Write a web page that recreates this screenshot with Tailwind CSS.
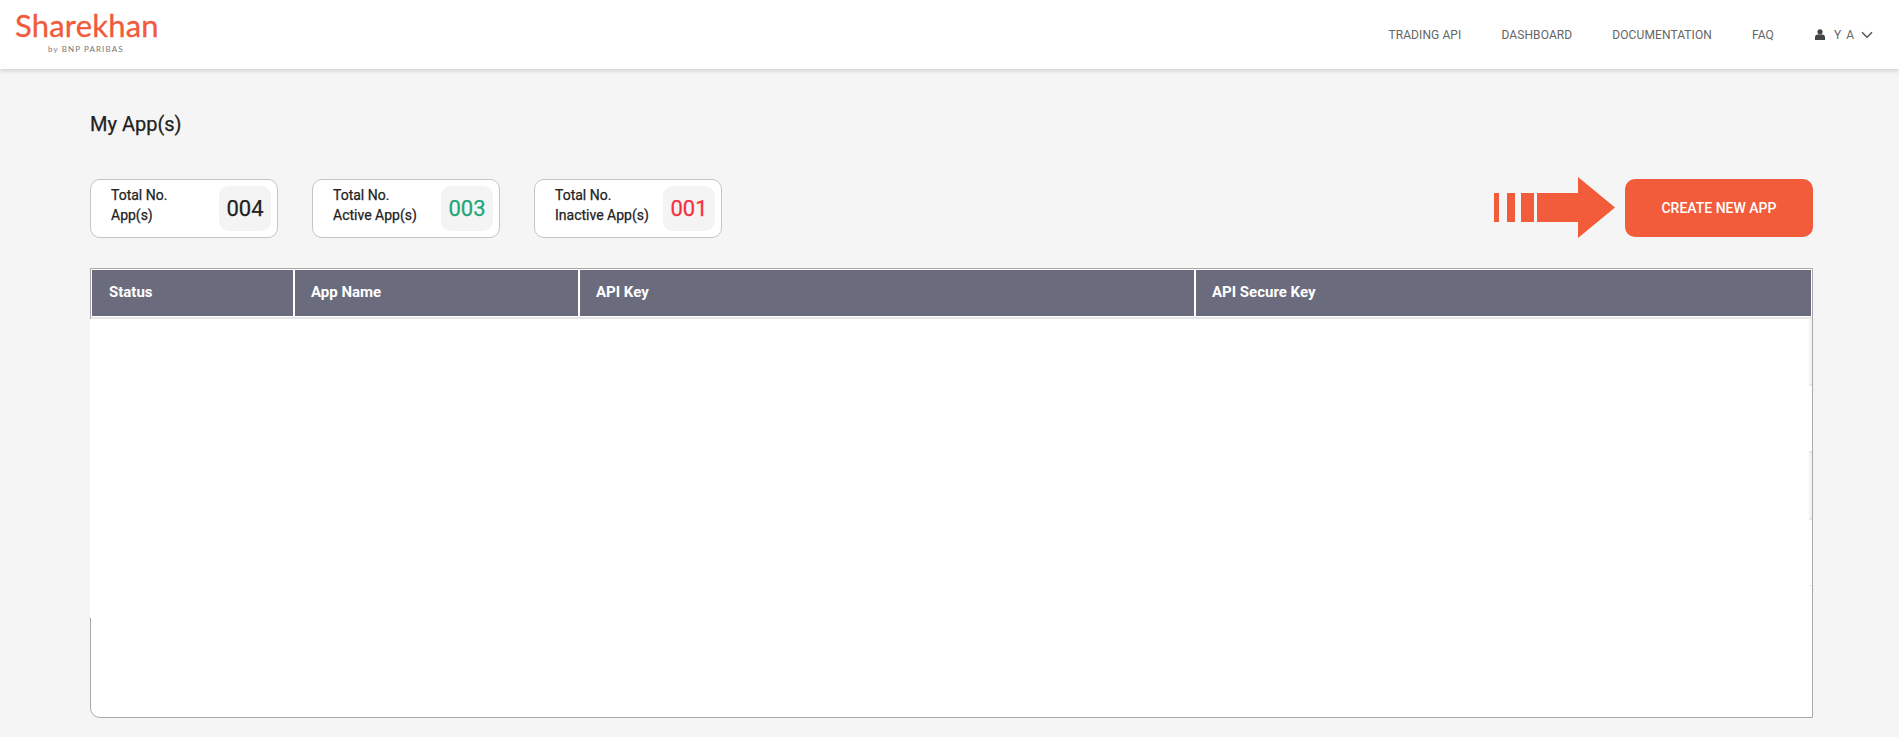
<!DOCTYPE html>
<html lang="en">
<head>
    <meta charset="UTF-8">
    <meta name="viewport" content="width=device-width, initial-scale=1.0">
    <script src="https://cdn.jsdelivr.net/npm/@tailwindcss/browser@4"></script>
    <title>My App(s)</title>
</head>
<body class="h-[737px] overflow-hidden bg-[#f5f5f5] font-['Roboto',sans-serif]">
    <!-- header -->
    <header class="flex h-[69px] items-center justify-between bg-white pl-[15px] pr-[26px] shadow-[0_1px_5px_rgba(0,0,0,0.2)]">
        <div class="mb-[5px] flex w-[143px] flex-col">
            <span class="font-['Lato',sans-serif] text-[31px] leading-[30px] tracking-[0.2px] text-[#f15a3a] [-webkit-text-stroke:0.3px]">Sharekhan</span>
            <span class="mt-[4px] pl-[33px] font-['Lato',sans-serif] text-[8px] leading-[10px] tracking-[1.1px] text-[#777]">by BNP PARIBAS</span>
        </div>
        <nav class="flex items-center text-[12px] tracking-[0.1px] text-[#666]">
            <a class="mr-10">TRADING API</a>
            <a class="mr-10">DASHBOARD</a>
            <a class="mr-10">DOCUMENTATION</a>
            <a class="mr-[41px]">FAQ</a>
            <svg class="mr-[9px] h-[11px] w-[10px]" viewBox="0 0 10 11" fill="#444"><circle cx="5" cy="2.8" r="2.6"/><path d="M0 11V8.2C0 6.6 1.3 5.6 2.6 5.6h4.800C8.700 5.6 10 6.6 10 8.2V11z"/></svg>
            <span class="mr-[6px] tracking-[1px]">Y A</span>
            <svg class="h-[8px] w-[12px]" viewBox="0 0 12 8" fill="none" stroke="#555" stroke-width="1.5"><path d="M1 1.2l5 5 5-5"/></svg>
        </nav>
    </header>

    <main class="pl-[90px] pr-[86px]">
        <h1 class="mt-[45px] text-[20px] leading-[20px] text-[#222] [-webkit-text-stroke:0.25px]">My App(s)</h1>

        <div class="mt-[45px] flex h-[59px] items-center justify-between">
            <div class="flex gap-[34px]">
                <div class="flex h-[59px] w-[188px] items-center justify-between rounded-[10px] border border-[#c4c4c4] bg-white pl-[20px] pr-[6px]">
                    <p class="mb-[8px] text-[14px] leading-[20px] text-[#222] [-webkit-text-stroke:0.25px]">Total No.<br>App(s)</p>
                    <span class="flex h-[45px] w-[52px] items-center justify-center rounded-[10px] bg-[#f4f4f4] text-[22px] text-[#222] [-webkit-text-stroke:0.25px]">004</span>
                </div>
                <div class="flex h-[59px] w-[188px] items-center justify-between rounded-[10px] border border-[#c4c4c4] bg-white pl-[20px] pr-[6px]">
                    <p class="mb-[8px] text-[14px] leading-[20px] text-[#222] [-webkit-text-stroke:0.25px]">Total No.<br>Active App(s)</p>
                    <span class="flex h-[45px] w-[52px] items-center justify-center rounded-[10px] bg-[#f4f4f4] text-[22px] text-[#22a67a] [-webkit-text-stroke:0.25px]">003</span>
                </div>
                <div class="flex h-[59px] w-[188px] items-center justify-between rounded-[10px] border border-[#c4c4c4] bg-white pl-[20px] pr-[6px]">
                    <p class="mb-[8px] text-[14px] leading-[20px] text-[#222] [-webkit-text-stroke:0.25px]">Total No.<br>Inactive App(s)</p>
                    <span class="flex h-[45px] w-[52px] items-center justify-center rounded-[10px] bg-[#f4f4f4] text-[22px] text-[#f5303f] [-webkit-text-stroke:0.25px]">001</span>
                </div>
            </div>

            <div class="flex items-center gap-[9px]">
                <svg class="mb-[2px] h-[61px] w-[122px]" viewBox="0 0 122 61" fill="#f25c3b"><rect x="0" y="16" width="5" height="29"/><rect x="13" y="16" width="8" height="29"/><rect x="27" y="16" width="13" height="29"/><path d="M43 16h41V0l37 30.500-37 30.500V45H43z"/></svg>
                <button class="mb-[1px] h-[58px] w-[188px] rounded-[10px] bg-[#f25c3b] text-[14px] font-medium text-white">CREATE NEW APP</button>
            </div>
        </div>

        <!-- table box -->
        <div class="relative mt-[30px] h-[450px] rounded-bl-[10px] border border-[#a8a8a8] bg-white">
            <div class="flex h-[50px] border-b-[2px] border-[#e8e8e8] bg-white py-[1px] pl-[1px] pr-[1px] text-[15px] leading-[45px] font-bold text-white">
                <div class="w-[201px] bg-[#6a6c7e] pl-[17px]">Status</div>
                <div class="ml-[2px] w-[283px] bg-[#6a6c7e] pl-[16px]">App Name</div>
                <div class="ml-[2px] w-[614px] bg-[#6a6c7e] pl-[16px]">API Key</div>
                <div class="ml-[2px] flex-1 bg-[#6a6c7e] pl-[16px]">API Secure Key</div>
            </div>
            <!-- faint scroll track at right edge of the rows -->
            <div class="absolute right-0 top-[50px] h-[67px] w-[3px] border-b-[2px] border-[#e8e8e8] bg-[#f4f4f4]"></div>
            <div class="absolute right-0 top-[182px] h-[69px] w-[3px] border-y-[2px] border-[#e8e8e8] bg-[#f4f4f4]"></div>
            <div class="absolute right-0 top-[316px] h-[1px] w-[3px] bg-[#e8e8e8]"></div>
            <!-- white patch hiding the left border -->
            <div class="absolute -left-px top-[50px] h-[299px] w-px bg-white"></div>
        </div>
    </main>
</body>
</html>
